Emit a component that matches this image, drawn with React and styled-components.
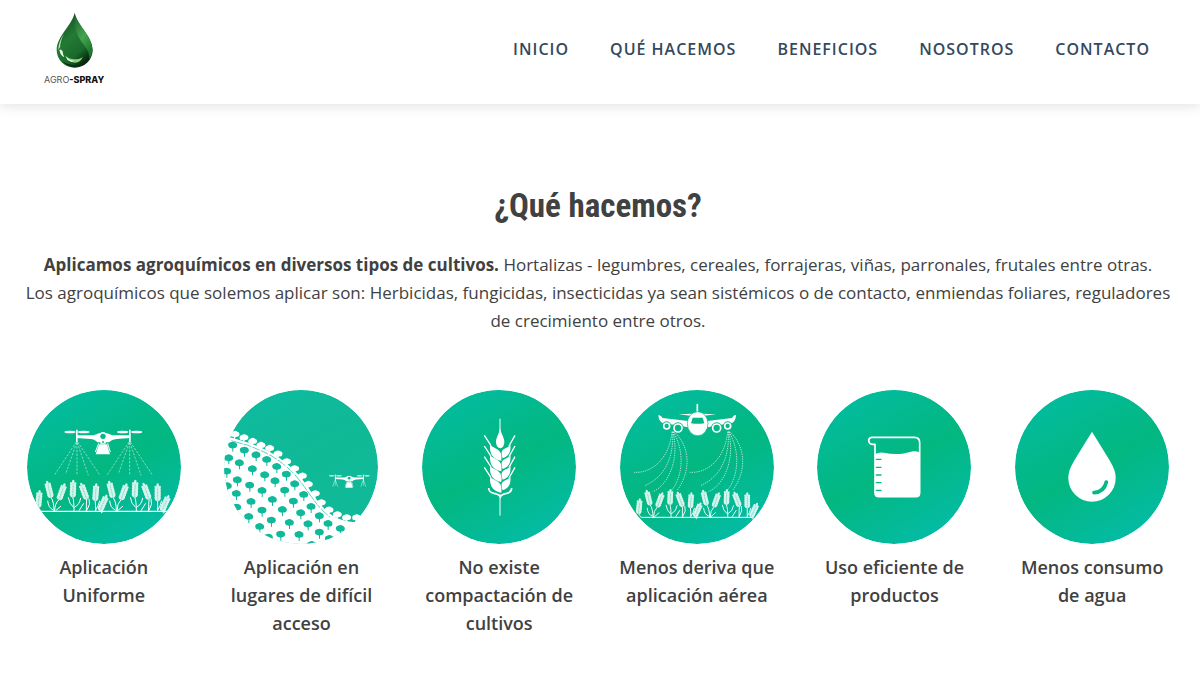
import React from 'react';
import styled, { createGlobalStyle } from 'styled-components';

const navLinks = [
  { label: 'Inicio', href: '#inicio' },
  { label: 'Qué hacemos', href: '#que-hacemos' },
  { label: 'Beneficios', href: '#beneficios' },
  { label: 'Nosotros', href: '#nosotros' },
  { label: 'Contacto', href: '#contacto' },
];

const edgeTrees = [
  [55, 157], [82, 167], [108, 178], [133, 190], [159, 199], [184, 216], [210, 239], [234, 260],
  [257, 282], [275, 307], [296, 335], [314, 362], [337, 384], [362, 398], [390, 407], [420, 407],
];

const fieldTrees = [
  [48, 190], [83, 205], [118, 219], [150, 233], [180, 254], [209, 277], [234, 306], [261, 338],
  [283, 374], [308, 402], [334, 425], [371, 440],
  [36, 228], [68, 243], [107, 261], [144, 279], [175, 297], [204, 325], [230, 358], [252, 393],
  [274, 426], [308, 451], [338, 470],
  [30, 268], [62, 294], [99, 310], [136, 326], [167, 353], [197, 383], [218, 422], [247, 458], [285, 488],
  [32, 312], [59, 335], [103, 359], [136, 385], [164, 415], [192, 457],
  [60, 376], [96, 404], [129, 434], [155, 466],
];

// x, y of the tip, tilt in degrees, x of the root
const ears = [
  [60, 326, 5, 64], [82, 298, -14, 103], [135, 306, 20, 105], [161, 295, 2, 163], [184, 304, -20, 200],
  [230, 306, 4, 228], [261, 340, 24, 248],
  [268, 298, -14, 290], [321, 306, 20, 292], [347, 295, 2, 350], [371, 304, -20, 387],
  [414, 306, 0, 414], [447, 341, 24, 434],
];

const GREEN = '#04b888';

const Ear = ({ x, y, tilt }) => (
  <g transform={`translate(${x} ${y}) rotate(${tilt})`} fill="#fff" opacity="0.84">
    <ellipse cx="0" cy="5" rx="4" ry="7" />
    {[12, 20, 28, 36, 44].map((cy) => (
      <g key={cy}>
        <ellipse cx="-5" cy={cy} rx="4" ry="7" transform={`rotate(-24 -5 ${cy})`} />
        <ellipse cx="5" cy={cy} rx="4" ry="7" transform={`rotate(24 5 ${cy})`} />
      </g>
    ))}
    <path d="M0 8V52" stroke="#fff" strokeWidth="2" />
  </g>
);

const Crops = () => (
  <g>
    {ears.map(([x, y, tilt, root]) => {
      const rad = (tilt * Math.PI) / 180;
      const ex = x - Math.sin(rad) * 50;
      const ey = y + Math.cos(rad) * 50;
      return (
        <g key={x}>
          <Ear x={x} y={y} tilt={tilt} />
          <path d={`M${ex} ${ey}Q${root} ${ey + 12} ${root} 388`} fill="none" stroke="#fff" strokeWidth="3" />
        </g>
      );
    })}
    {[0, 186].map((dx) => (
      <path
        key={dx}
        d="M84 356Q86 378 101 384M124 372L108 386M146 346Q148 366 162 376M183 348Q180 368 164 376M178 386L192 364M208 350Q214 366 202 384M240 356Q236 374 228 384"
        transform={`translate(${dx} 0)`}
        fill="none"
        stroke="#fff"
        strokeWidth="3"
      />
    ))}
  </g>
);

const Drone = ({ eye = GREEN }) => (
  <g fill="#fff">
    <ellipse cx="151" cy="150" rx="17" ry="4" />
    <ellipse cx="192" cy="150" rx="18" ry="4" />
    <ellipse cx="309" cy="150" rx="17" ry="4" />
    <ellipse cx="351" cy="150" rx="17" ry="4" />
    <path d="M169 143h5v37h-5zM328 143h5v37h-5z" />
    <path d="M170 160H222L238 154H262L278 160H332V168L290 171Q276 172 268 181H233Q226 172 212 171L170 168Z" />
    <circle cx="250" cy="163" r="13" />
    <circle cx="250" cy="163" r="8" fill={eye} />
    <path d="M242 177h16v8h-16zM238 187H262L271 217H228Z" />
    <path d="M237 184L227 210M264 184L272 210" stroke="#fff" strokeWidth="3" />
    <circle cx="250" cy="180" r="3" fill={eye} />
  </g>
);

const UniformArt = () => (
  <>
    <Drone />
    {[0, 158].map((dx) => (
      <path
        key={dx}
        d="M170 180L105 278M171 182L138 276M172 182V280M173 182L206 280M174 180L241 280"
        transform={`translate(${dx} 0)`}
        fill="none"
        stroke="#fff"
        strokeWidth="2"
        strokeDasharray="7 4"
        opacity="0.75"
      />
    ))}
    <Crops />
    <path d="M62 388H452" stroke="#fff" strokeWidth="4" />
  </>
);

const SlopeArt = () => (
  <>
    <path
      d="M20 160L48 168Q100 182 140 200Q190 222 236 268Q262 296 290 340Q316 378 346 400Q380 424 440 420L500 410V500H10Z"
      fill="#fff"
    />
    <path d="M44 176Q96 187 140 209Q190 232 232 275Q256 302 284 344Q314 386 340 405" fill="none" stroke="#10b99a" strokeWidth="2" />
    {edgeTrees.map(([x, y]) => (
      <g key={x}>
        <path d={`M${x} ${y}l-3 20`} stroke="#fff" strokeWidth="4" />
        <path d={`M${x - 13} ${y + 3}q-2-9 6-11q8-5 14 0q8 3 6 10q-2 6-8 5q-5 4-10 0q-6 2-8-4z`} fill="#fff" />
      </g>
    ))}
    {fieldTrees.map(([x, y]) => (
      <g key={`${x}-${y}`} fill="#10b99a">
        <path d={`M${x - 13} ${y + 2}q-2-9 6-11q8-4 14 0q8 3 6 12q-2 6-8 5q-5 3-10 0q-6 1-8-6z`} />
        <path d={`M${x - 1} ${y + 6}h3v13h-3z`} />
      </g>
    ))}
    <g transform="translate(265 202) scale(.53)">
      <Drone eye="#10b99a" />
      <path d="M168 178L157 212M174 178L185 212M171 178V206M327 178L316 212M333 178L344 212M330 178V206" stroke="#fff" strokeWidth="3" opacity="0.8" />
    </g>
  </>
);

const WheatArt = () => (
  <>
    <path d="M256 110V150M256 336V401" stroke="#fff" strokeWidth="3" />
    <path d="M256 138C260 158 270 168 269 182Q267 197 257 199Q246 197 244 182C243 168 253 158 256 138Z" fill="#fff" />
    {[0, 32, 64, 96].map((dy) => (
      <g key={dy} transform={`translate(0 ${dy})`} fill="#fff">
        <path d="M226 188C236 198 254 200 259 215Q262 226 260 236C240 232 224 222 226 188Z" />
        <path d="M287 188C281 198 264 198 261 210Q260 220 264 229C280 224 290 212 287 188Z" />
        <path d="M209 160L229 191M301 160L283 192" stroke="#fff" strokeWidth="4" />
      </g>
    ))}
    <path d="M222 318Q222 331 238 334Q252 336 257 345Q262 336 276 334Q291 331 291 318" fill="none" stroke="#fff" strokeWidth="5" />
  </>
);

const PlaneArt = () => (
  <>
    <path d="M137 100Q144 98 150 108L226 117V136L148 122Q138 116 137 100ZM370 99Q363 98 358 108L284 117V136L360 122Q370 114 370 99Z" fill="#fff" />
    <path d="M198 97L240 95V102ZM310 97L268 95V102Z" fill="#fff" />
    <path d="M254 68V94" stroke="#fff" strokeWidth="5" strokeLinecap="round" />
    <ellipse cx="255" cy="125" rx="31" ry="36" fill="#fff" stroke={GREEN} strokeWidth="2" />
    <path d="M240 107H270L275 124Q255 127 235 124Z" fill={GREEN} />
    {[[162, 132, 9], [196, 138, 12], [312, 138, 12], [345, 132, 9]].map(([cx, cy, r]) => (
      <g key={cx}>
        <circle cx={cx} cy={cy} r={r + 5} fill={GREEN} />
        <circle cx={cx} cy={cy} r={r} fill={GREEN} stroke="#fff" strokeWidth="5" />
      </g>
    ))}
    {[0, 167].map((dx) => (
      <path
        key={dx}
        d="M178 149C172 220 126 274 64 271M180 149C184 230 154 286 96 311M181 149C202 236 164 312 120 329M182 149C222 220 204 294 176 326M184 149C230 190 238 262 194 324"
        transform={`translate(${dx} 0)`}
        fill="none"
        stroke="#fff"
        strokeWidth="3"
        strokeDasharray="4 3"
        opacity="0.65"
      />
    ))}
    <g transform="translate(27 57) scale(.91 .9)">
      <Crops />
    </g>
    <path d="M86 406H420" stroke="#fff" strokeWidth="3" />
  </>
);

const BeakerArt = () => (
  <>
    <path
      d="M196 187V332Q196 344 208 344H318Q330 344 330 332V182Q330 166 314 166H186Q177 167 177 176Q178 186 188 187Z"
      fill="none"
      stroke="#fff"
      strokeWidth="5"
      strokeLinejoin="round"
    />
    <path d="M196 216Q208 210 222 212Q250 218 278 215Q296 212 310 208Q322 207 330 212V334Q328 344 316 344H210Q197 344 196 332Z" fill="#fff" />
    <path d="M200 232H214M200 256H214M200 279H214M200 302H214M200 325H214" stroke={GREEN} strokeWidth="4" strokeLinecap="round" />
  </>
);

const WaterArt = () => (
  <>
    <path d="M253 149L302 229C316 252 324 268 324 289A71 70 0 0 1 182 289C182 268 190 252 204 229Z" fill="#fff" />
    <path d="M259 332Q289 330 296 300" fill="none" stroke={GREEN} strokeWidth="11" strokeLinecap="round" />
  </>
);

const services = [
  { id: 'uniforme', title: 'Aplicación Uniforme', art: UniformArt, width: 100 },
  { id: 'acceso', title: 'Aplicación en lugares de difícil acceso', art: SlopeArt, width: 150, flat: true },
  { id: 'compactacion', title: 'No existe compactación de cultivos', art: WheatArt, width: 150 },
  { id: 'deriva', title: 'Menos deriva que aplicación aérea', art: PlaneArt, width: 160 },
  { id: 'productos', title: 'Uso eficiente de productos', art: BeakerArt, width: 150 },
  { id: 'agua', title: 'Menos consumo de agua', art: WaterArt, width: 150 },
];

const ServiceIcon = ({ id, flat, art: Art }) => (
  <Badge viewBox="22 24 462 462" aria-hidden="true">
    <defs>
      <linearGradient id={`fill-${id}`} x1="0.22" y1="0" x2="0.78" y2="1">
        <stop offset="0" stopColor={flat ? '#0ebb9f' : '#02bca0'} />
        <stop offset="0.5" stopColor={flat ? '#10b996' : '#03b780'} />
        <stop offset="1" stopColor={flat ? '#10b99a' : '#03bca8'} />
      </linearGradient>
      <clipPath id={`clip-${id}`}>
        <circle cx="253" cy="255" r="231" />
      </clipPath>
    </defs>
    <g clipPath={`url(#clip-${id})`}>
      <circle cx="253" cy="255" r="231" fill={`url(#fill-${id})`} />
      <Art />
    </g>
  </Badge>
);

const LogoDrop = () => (
  <svg width="37" height="56" viewBox="78 36 111 168" aria-hidden="true">
    <defs>
      <linearGradient id="drop-body" x1="0" y1="0" x2="0.6" y2="1">
        <stop offset="0" stopColor="#123f1c" />
        <stop offset="0.5" stopColor="#237a35" />
        <stop offset="0.8" stopColor="#1a6a2b" />
        <stop offset="1" stopColor="#08280f" />
      </linearGradient>
      <linearGradient id="drop-side" x1="0" y1="0" x2="0.5" y2="1">
        <stop offset="0" stopColor="#1d5f2b" />
        <stop offset="0.6" stopColor="#44a550" />
        <stop offset="1" stopColor="#1c7a2e" />
      </linearGradient>
    </defs>
    <path d="M134 38C142 76 188 108 188 150A54 53 0 0 1 80 150C80 108 126 76 134 38Z" fill="url(#drop-body)" />
    <path d="M134 42C144 78 188 110 187 152Q185 168 178 178C182 132 128 130 134 42Z" fill="url(#drop-side)" />
    <path d="M102 101Q84 128 85 150Q92 143 91 132Q94 116 102 101Z" fill="#c8e6c2" />
    <path d="M88 150Q92 146 98 154Q98 164 103 172Q92 168 88 150Z" fill="#e9f7e6" />
    <path d="M105 166Q116 178 134 178Q150 178 158 170Q154 186 134 188Q112 186 105 166Z" fill="#8fd07f" />
    <path d="M108 170Q118 181 130 182Q128 187 120 184Q110 180 108 170Z" fill="#f2fbef" />
    <path d="M96 184Q112 201 136 201Q158 200 174 184Q156 196 134 195Q112 195 96 184Z" fill="#0a2d12" />
  </svg>
);

const App = () => (
  <>
    <GlobalStyle />
    <Header>
      <Logo href="#inicio">
        <LogoDrop />
        <LogoText>
          AGRO<strong>-SPRAY</strong>
        </LogoText>
      </Logo>
      <Nav>
        {navLinks.map((item) => (
          <NavLink key={item.href} href={item.href}>
            {item.label}
          </NavLink>
        ))}
      </Nav>
    </Header>
    <Section id="que-hacemos">
      <Title>¿Qué hacemos?</Title>
      <Intro>
        <strong>Aplicamos agroquímicos en diversos tipos de cultivos.</strong> Hortalizas - legumbres, cereales,
        forrajeras, viñas, parronales, frutales entre otras.
        <br />
        Los agroquímicos que solemos aplicar son: Herbicidas, fungicidas, insecticidas ya sean sistémicos o de
        contacto, enmiendas foliares, reguladores de crecimiento entre otros.
      </Intro>
      <Services>
        {services.map((item) => (
          <Service key={item.id}>
            <ServiceIcon {...item} />
            <ServiceTitle $width={item.width}>{item.title}</ServiceTitle>
          </Service>
        ))}
      </Services>
    </Section>
  </>
);

const GlobalStyle = createGlobalStyle`
  * {
    box-sizing: border-box;
  }
  body {
    margin: 0;
    background: #fff;
    color: #414141;
    font-family: 'Open Sans', sans-serif;
    font-size: 17px;
    line-height: 28px;
  }
`;

const Header = styled.header`
  display: flex;
  align-items: flex-start;
  justify-content: space-between;
  padding: 12px 50px 18px 44px;
  background: #fff;
  box-shadow: 0 2px 12px rgba(0, 0, 0, 0.12);
`;

const Logo = styled.a`
  display: flex;
  flex-direction: column;
  align-items: center;
  color: #555;
  text-decoration: none;
`;

const LogoText = styled.span`
  margin-top: 6px;
  font-family: Inter, sans-serif;
  font-size: 9px;
  line-height: 12px;
  strong {
    color: #111;
    font-weight: 800;
  }
`;

const Nav = styled.nav`
  display: flex;
  gap: 41px;
  padding-top: 23px;
`;

const NavLink = styled.a`
  color: #34495e;
  font-size: 16px;
  font-weight: 600;
  letter-spacing: 1px;
  text-decoration: none;
  text-transform: uppercase;
`;

const Section = styled.section`
  padding: 80px 9px 40px 5px;
  text-align: center;
`;

const Title = styled.h2`
  margin: 0 0 24px;
  font-family: 'Roboto Condensed', 'Liberation Sans Narrow', Roboto, sans-serif;
  font-size: 33px;
  font-weight: 700;
  line-height: 43px;
`;

const Intro = styled.p`
  margin: 0 0 55px;
  padding: 0 16px;
`;

const Services = styled.div`
  display: grid;
  grid-template-columns: repeat(6, 1fr);
`;

const Service = styled.article`
  display: flex;
  flex-direction: column;
  align-items: center;
`;

const Badge = styled.svg`
  display: block;
  width: 154px;
  height: 154px;
`;

const ServiceTitle = styled.h3`
  margin: 9px 0 0;
  max-width: ${(props) => props.$width}px;
  font-size: 18px;
  font-weight: 600;
  line-height: 28px;
`;

export default App;
